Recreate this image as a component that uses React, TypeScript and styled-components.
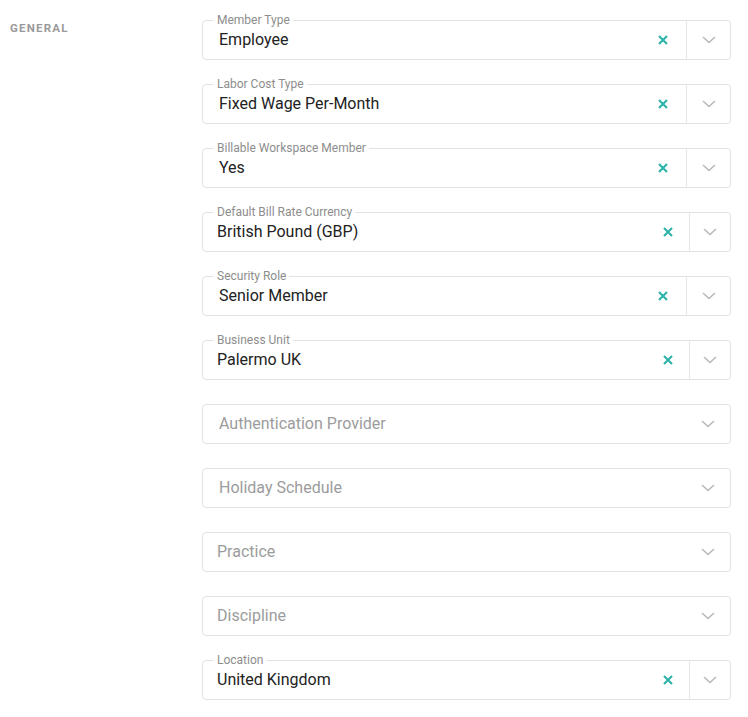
import React from "react";
import styled, { createGlobalStyle } from "styled-components";

const Global = createGlobalStyle`
  html, body { margin: 0; padding: 0; background: #fff; }
  body { font-family: Roboto, "Liberation Sans", Arial, sans-serif; }
  * { box-sizing: border-box; }
`;

const Page = styled.div`
  display: grid;
  grid-template-columns: 202px 529px;
  padding-top: 20px;
`;

const SectionTitle = styled.div`
  padding: 1px 0 0 10px;
  font-size: 11.5px;
  font-weight: 700;
  letter-spacing: 1.2px;
  color: #9a9a9a;
  line-height: 14px;
`;

const Fields = styled.div`
  display: flex;
  flex-direction: column;
  gap: 24px;
`;

const Field = styled.div`
  position: relative;
  height: 40px;
  border: 1px solid #e2e2e2;
  border-radius: 4px;
  display: flex;
  align-items: stretch;
  background: #fff;
`;

const Label = styled.span`
  position: absolute;
  top: -8px;
  left: 11px;
  padding: 0 3px;
  background: #fff;
  font-size: 12px;
  line-height: 14px;
  color: #8d8d8d;
`;

const Value = styled.div<{ $indent: number; $empty: boolean }>`
  flex: 1;
  display: flex;
  align-items: center;
  padding-left: ${(p) => p.$indent}px;
  padding-bottom: 2px;
  font-size: 16px;
  color: ${(p) => (p.$empty ? "#9c9c9c" : "#222")};
`;

const Clear = styled.div<{ $w: number }>`
  width: ${(p) => p.$w}px;
  display: flex;
  align-items: center;
  justify-content: flex-start;
`;

const Separator = styled.div`
  width: 1px;
  align-self: stretch;
  background: #e8e8e8;
`;

const Toggle = styled.div<{ $w: number }>`
  width: ${(p) => p.$w}px;
  display: flex;
  align-items: center;
  justify-content: center;
`;

const XIcon = () => (
  <svg width="10" height="10" viewBox="0 0 10 10">
    <path d="M1 1 L9 9 M9 1 L1 9" stroke="#2ab3a6" strokeWidth="2.1" strokeLinecap="butt" />
  </svg>
);

const Chevron = () => (
  <svg width="14" height="8" viewBox="0 0 14 8">
    <path d="M1 1 L7 6.5 L13 1" fill="none" stroke="#b9b9b9" strokeWidth="1.6" />
  </svg>
);

type F = {
  label?: string;
  value: string;
  indent: number;
  narrow?: boolean;
};

const fields: F[] = [
  { label: "Member Type", value: "Employee", indent: 16 },
  { label: "Labor Cost Type", value: "Fixed Wage Per-Month", indent: 16 },
  { label: "Billable Workspace Member", value: "Yes", indent: 16 },
  { label: "Default Bill Rate Currency", value: "British Pound (GBP)", indent: 14, narrow: true },
  { label: "Security Role", value: "Senior Member", indent: 16 },
  { label: "Business Unit", value: "Palermo UK", indent: 14, narrow: true },
  { value: "Authentication Provider", indent: 16 },
  { value: "Holiday Schedule", indent: 16 },
  { value: "Practice", indent: 14 },
  { value: "Discipline", indent: 14 },
  { label: "Location", value: "United Kingdom", indent: 14, narrow: true },
];

export default function App() {
  return (
    <>
      <Global />
      <Page>
        <SectionTitle>GENERAL</SectionTitle>
        <Fields>
          {fields.map((f) => {
            const filled = !!f.label;
            return (
              <Field key={f.value}>
                {f.label && <Label>{f.label}</Label>}
                <Value $indent={f.indent} $empty={!filled}>
                  {f.value}
                </Value>
                {filled && (
                  <>
                    <Clear $w={f.narrow ? 26 : 28}>
                      <XIcon />
                    </Clear>
                    <Separator />
                  </>
                )}
                <Toggle $w={filled ? (f.narrow ? 40 : 43) : 44}>
                  <Chevron />
                </Toggle>
              </Field>
            );
          })}
        </Fields>
      </Page>
    </>
  );
}
